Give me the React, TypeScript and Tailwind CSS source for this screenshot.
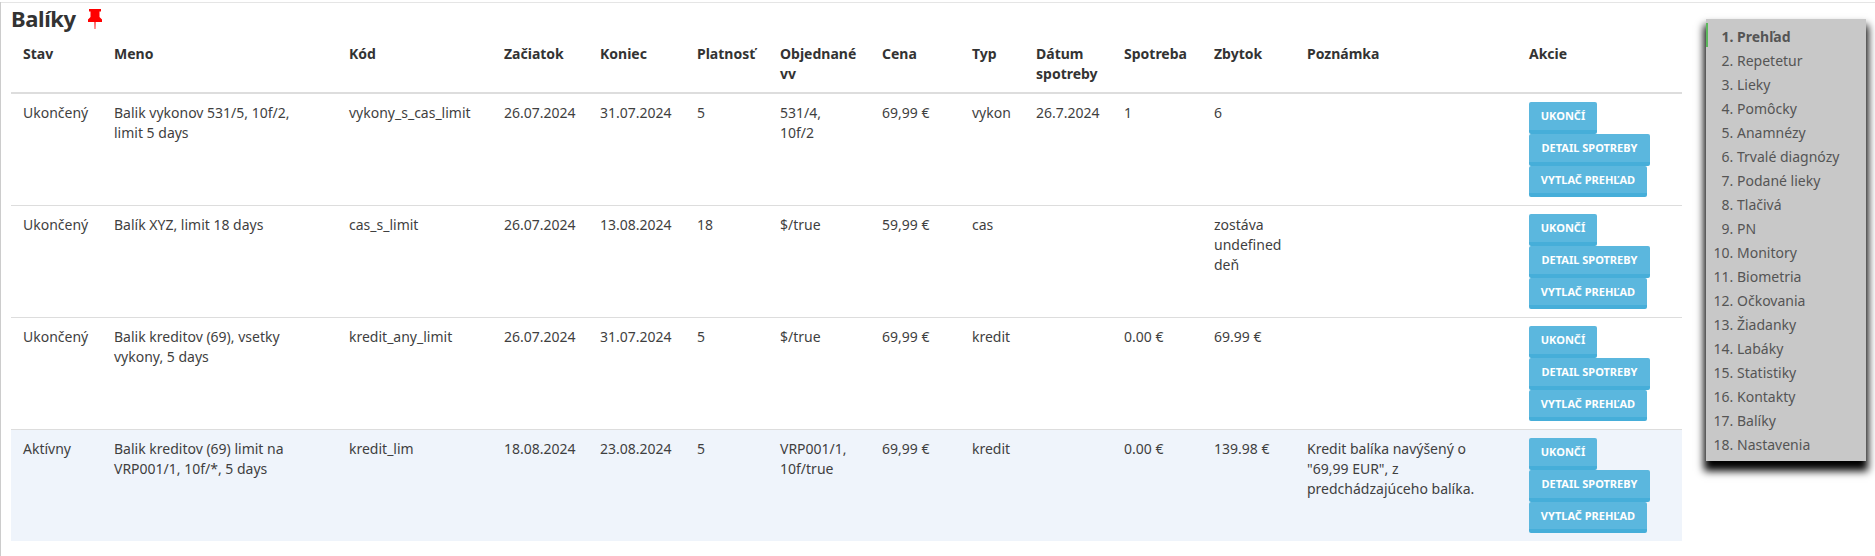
import { ReactNode } from 'react'

const columns = [
  { label: 'Stav', width: 91 },
  { label: 'Meno', width: 235 },
  { label: 'Kód', width: 155 },
  { label: 'Začiatok', width: 96 },
  { label: 'Koniec', width: 97 },
  { label: 'Platnosť', width: 83 },
  { label: 'Objednané vv', width: 102 },
  { label: 'Cena', width: 90 },
  { label: 'Typ', width: 64 },
  { label: 'Dátum spotreby', width: 88 },
  { label: 'Spotreba', width: 90 },
  { label: 'Zbytok', width: 93 },
  { label: 'Poznámka', width: 222 },
  { label: 'Akcie', width: 165 }
]

const rows: { cells: string[]; active?: boolean }[] = [
  {
    cells: ['Ukončený', 'Balik vykonov 531/5, 10f/2,\nlimit 5 days', 'vykony_s_cas_limit', '26.07.2024', '31.07.2024', '5', '531/4,\n10f/2', '69,99 €', 'vykon', '26.7.2024', '1', '6', '']
  },
  {
    cells: ['Ukončený', 'Balík XYZ, limit 18 days', 'cas_s_limit', '26.07.2024', '13.08.2024', '18', '$/true', '59,99 €', 'cas', '', '', 'zostáva\nundefined\ndeň', '']
  },
  {
    cells: ['Ukončený', 'Balik kreditov (69), vsetky\nvykony, 5 days', 'kredit_any_limit', '26.07.2024', '31.07.2024', '5', '$/true', '69,99 €', 'kredit', '', '0.00 €', '69.99 €', '']
  },
  {
    active: true,
    cells: ['Aktívny', 'Balik kreditov (69) limit na\nVRP001/1, 10f/*, 5 days', 'kredit_lim', '18.08.2024', '23.08.2024', '5', 'VRP001/1,\n10f/true', '69,99 €', 'kredit', '', '0.00 €', '139.98 €', 'Kredit balíka navýšený o\n"69,99 EUR", z\npredchádzajúceho balíka.']
  }
]

const menu = ['Prehľad', 'Repetetur', 'Lieky', 'Pomôcky', 'Anamnézy', 'Trvalé diagnózy', 'Podané lieky', 'Tlačivá', 'PN', 'Monitory', 'Biometria', 'Očkovania', 'Žiadanky', 'Labáky', 'Statistiky', 'Kontakty', 'Balíky', 'Nastavenia']

function ActionButton({ children, className }: { children: ReactNode; className: string }): ReactNode {
  return (
    <div>
      <button className={`${className} bg-[#5bb7de] border-b-[4px] border-[#46aed9] rounded-[2px] text-white text-[11px] font-bold uppercase whitespace-nowrap`}>
        {children}
      </button>
    </div>
  )
}

function Pin(): ReactNode {
  return (
    <svg width="14" height="20" viewBox="0 0 14 20" className="ml-[12px] mt-[4px]">
      <path d="M1 0h12v2.500h-1.500V8L14 10.500V13H7.600L7.400 20h-.8L6.400 13H0v-2.500L2.500 8V2.500H1z" fill="#ff0000" />
    </svg>
  )
}

export default function App(): ReactNode {
  return (
    <div className="relative h-[556px] overflow-hidden bg-white text-[#3f3f3f] text-[14px] leading-[20px] font-['Noto_Sans',sans-serif]">
      <div className="h-full pl-[10px] border-l border-[#cccccc]">
        <div className="border-t border-[#e5e5e5] mt-[2px] -ml-[10px]" />
        <div className="flex items-start h-[28px] pt-[2px]">
          <h1 className="text-[22px] leading-[26px] font-bold text-[#333] tracking-[-0.4px]">Balíky</h1>
          <Pin />
        </div>
        <table className="w-[1671px] table-fixed border-collapse">
          <colgroup>
            {columns.map((col) => (
              <col key={col.label} style={{ width: col.width }} />
            ))}
          </colgroup>
          <thead>
            <tr className="border-b-[2px] border-[#dddddd]">
              {columns.map((col) => (
                <th key={col.label} className="px-[12px] pt-[13px] pb-[8px] text-left align-top font-bold text-[#333]">
                  {col.label}
                </th>
              ))}
            </tr>
          </thead>
          <tbody>
            {rows.map((row, i) => (
              <tr key={i} className={row.active ? 'bg-[#eff4fb]' : 'border-b border-[#dddddd]'}>
                {row.cells.map((cell, j) => (
                  <td key={j} className="px-[12px] pt-[9px] align-top h-[111px] whitespace-pre-line">
                    {cell}
                  </td>
                ))}
                <td className="px-[12px] pt-[8px] pb-[8px] align-top">
                  <ActionButton className="w-[68px] h-[32px]">Ukončí</ActionButton>
                  <ActionButton className="w-[121px] h-[32px]">Detail spotreby</ActionButton>
                  <ActionButton className="w-[118px] h-[31px]">Vytlač prehľad</ActionButton>
                </td>
              </tr>
            ))}
          </tbody>
        </table>
      </div>
      <div className="absolute left-[1706px] top-[19px] w-[160px] h-[442px] bg-[#c8c8c8] shadow-[0_8px_8px_2px_#000] text-[#555]">
        <span className="absolute left-0 top-[4px] w-[2px] h-[24px] bg-[#5cb85c]" />
        <ol className="list-decimal pl-[31px] pt-[6px] leading-[24px]">
          {menu.map((item, i) => (
            <li key={item} className={i === 0 ? 'font-bold' : ''}>
              {item}
            </li>
          ))}
        </ol>
      </div>
    </div>
  )
}
